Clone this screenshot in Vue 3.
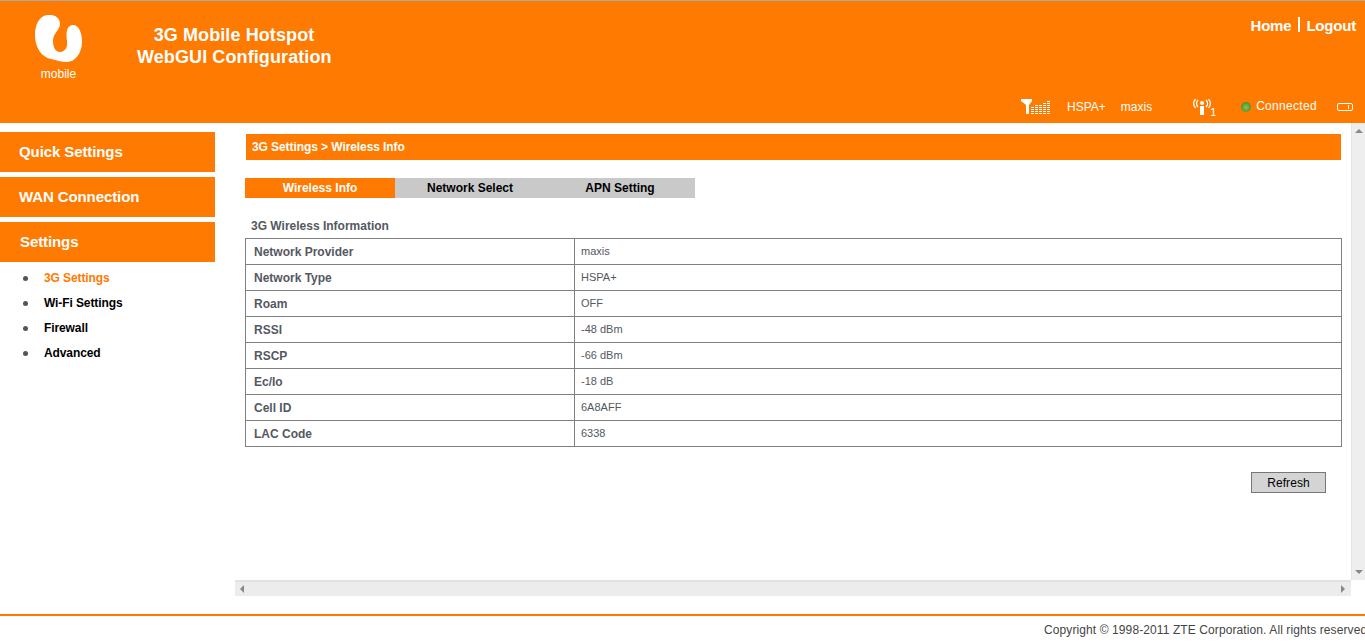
<template>
  <div class="page">
    <header class="top">
      <div class="top-row">
        <div class="logo">
          <svg width="47" height="50" viewBox="0 0 47 50">
            <path fill="#fff" d="M12 0C20 -1 25 3 25 9C25 15 18 18 18 26C18 33 21 37 25 37C30 37 33 32 32 26C31 20 31 10 38 10C44 10 47 18 47 27C47 38 40 47 32 47C26 47 22 45 16 44C6 42 0 32 0 20C0 10 4 1 12 0Z" />
          </svg>
          <span class="logo-text">mobile</span>
        </div>
        <div class="title">3G Mobile Hotspot<br />WebGUI Configuration</div>
        <nav class="top-links">
          <a>Home</a><span class="sep"></span><a>Logout</a>
        </nav>
      </div>
      <div class="status">
        <svg class="ic-signal" width="30" height="16" viewBox="0 0 30 16">
          <path fill="#fff" d="M0 0H11V2L8 6V15H5V6L0 2Z" />
          <g fill="#fff">
            <rect v-for="b in signalBars" :key="b.x + '-' + b.y" :x="b.x" :y="b.y" width="3" height="1" />
          </g>
        </svg>
        <span class="st-net">HSPA+</span>
        <span class="st-op">maxis</span>
        <svg class="ic-wifi" width="24" height="16" viewBox="0 0 24 16">
          <g fill="none" stroke="#fff" stroke-width="1.3">
            <path d="M5 1C3 3 3 6 5 8M2.500 0C0 3 0 6 2.500 9M13 1C15 3 15 6 13 8M15.500 0C18 3 18 6 15.500 9" />
          </g>
          <circle cx="9" cy="4" r="2" fill="#fff" />
          <rect x="7" y="7" width="4" height="9" fill="#fff" />
        </svg>
        <span class="wifi-num">1</span>
        <span class="dot"></span>
        <span class="st-conn">Connected</span>
        <span class="battery"><i></i></span>
      </div>
    </header>

    <div class="middle">
      <aside class="side">
        <div class="menu-btn q">Quick Settings</div>
        <div class="menu-btn">WAN Connection</div>
        <div class="menu-btn s">Settings</div>
        <ul class="sub">
          <li v-for="(item, i) in subMenu" :key="item" :class="{ on: i === 0 }">{{ item }}</li>
        </ul>
      </aside>

      <section class="frame">
        <div class="frame-row">
          <div class="content">
            <div class="crumb">3G Settings &gt; Wireless Info</div>
            <div class="tabs">
              <div v-for="(t, i) in tabs" :key="t" class="tab" :class="{ on: i === 0 }">{{ t }}</div>
            </div>
            <h3 class="info-title">3G Wireless Information</h3>
            <table class="info">
              <tbody>
                <tr v-for="r in rows" :key="r[0]">
                  <th>{{ r[0] }}</th>
                  <td>{{ r[1] }}</td>
                </tr>
              </tbody>
            </table>
            <div class="actions">
              <button class="refresh" type="button">Refresh</button>
            </div>
          </div>
          <div class="vbar">
            <span class="arr up"></span>
            <span class="arr down"></span>
          </div>
        </div>
        <div class="hbar">
          <span class="arr left"></span>
          <span class="arr right"></span>
        </div>
      </section>
    </div>

    <footer class="foot">Copyright © 1998-2011 ZTE Corporation. All rights reserved</footer>
  </div>
</template>

<script setup>
const subMenu = ['3G Settings', 'Wi-Fi Settings', 'Firewall', 'Advanced']
const tabs = ['Wireless Info', 'Network Select', 'APN Setting']
const rows = [
  ['Network Provider', 'maxis'],
  ['Network Type', 'HSPA+'],
  ['Roam', 'OFF'],
  ['RSSI', '-48 dBm'],
  ['RSCP', '-66 dBm'],
  ['Ec/Io', '-18 dB'],
  ['Cell ID', '6A8AFF'],
  ['LAC Code', '6338'],
]

// five stepped bars of the signal meter, dashed
const barTops = [8, 6, 6, 4, 2]
const signalBars = []
barTops.forEach((top, col) => {
  for (let y = top; y < 16; y += 2) signalBars.push({ x: 10 + col * 4, y })
})
</script>

<style>
html, body { margin: 0; overflow: hidden; background: #fff; }
</style>

<style scoped>
.page { width: 1365px; height: 644px; overflow: hidden; font-family: "Liberation Sans", Arial, sans-serif; }

/* Header */
.top { height: 122px; background: #ff7a00; border-top: 1px solid #aaa; color: #fff; }
.top-row { display: flex; height: 89px; }
.logo { width: 47px; margin: 14px 0 0 35px; display: flex; flex-direction: column; align-items: center; }
.logo svg { display: block; flex-shrink: 0; }
.logo-text { font-size: 12px; line-height: 12px; margin-top: 3px; }
.title { width: 194px; margin: 23px 0 0 55px; font-size: 18px; font-weight: 700; line-height: 22px; letter-spacing: .1px; text-align: center; white-space: nowrap; }
.top-links { margin: 16px 9px 0 auto; display: flex; align-items: flex-start; font-size: 15px; font-weight: 700; line-height: 18px; letter-spacing: -.2px; }
.sep { width: 2px; height: 15px; margin: 0 6px 0 7px; background: #fff; }
.status { display: flex; align-items: center; height: 33px; font-size: 12px; }
.ic-signal { margin-left: 1021px; }
.st-net { margin-left: 16px; }
.st-op { margin-left: 15px; }
.ic-wifi { margin-left: 41px; }
.wifi-num { font-size: 11px; margin: 10px 0 0 -7px; width: 9px; }
.dot { width: 10px; height: 10px; margin-left: 22px; border-radius: 50%; background: radial-gradient(circle at 50% 55%, #8cc63f, #4f8f3a 70%, #7f9a6a); }
.st-conn { margin-left: 5px; margin-top: -2px; letter-spacing: .3px; }
.battery { width: 14px; height: 6px; margin-left: 20px; border: 1px solid #fff; border-radius: 2px; position: relative; }
.battery i { position: absolute; right: 3px; top: 1px; width: 1px; height: 4px; background: #fff; }

/* Sidebar */
.middle { display: flex; height: 473px; }
.side { width: 215px; padding-top: 9px; margin-right: 20px; }
.menu-btn { height: 40px; margin-bottom: 5px; padding-left: 19px; background: #ff7a00; color: #fff; font-size: 15px; font-weight: 700; line-height: 40px; letter-spacing: -.1px; }
.menu-btn.s { padding-left: 20px; margin-bottom: 4px; }
.sub { list-style: none; margin: 0; padding: 0; }
.sub li { position: relative; height: 25px; padding-left: 44px; font-size: 12px; font-weight: 700; line-height: 25px; letter-spacing: -.1px; color: #000; }
.sub li::before { content: ""; position: absolute; left: 23px; top: 10px; width: 5px; height: 5px; border-radius: 50%; background: #555; }
.sub li.on { color: #ff7a00; }

/* Frame */
.frame { width: 1130px; display: flex; flex-direction: column; }
.frame-row { display: flex; height: 457px; }
.content { width: 1117px; box-sizing: border-box; padding: 11px 0 0 10px; }
.crumb { width: 1095px; height: 26px; margin-left: 1px; padding-left: 6px; box-sizing: border-box; background: #ff7a00; color: #fff; font-size: 12px; font-weight: 700; line-height: 27px; letter-spacing: -.08px; }
.tabs { display: flex; margin-top: 18px; }
.tab { width: 150px; height: 20px; background: #c9c9c9; color: #000; font-size: 12px; font-weight: 700; line-height: 20px; text-align: center; }
.tab.on { background: #ff7a00; color: #fff; }
.info-title { margin: 21px 0 0 6px; font-size: 12px; line-height: 14px; font-weight: 700; color: #555860; }
.info { width: 1097px; margin-top: 5px; border-collapse: collapse; table-layout: fixed; }
.info th, .info td { height: 25px; padding: 0; border: 1px solid #808080; text-align: left; }
.info th { width: 320px; padding-left: 8px; font-size: 12px; color: #555860; }
.info td { height: 24px; padding: 0 0 1px 6px; font-size: 11px; color: #555860; }
.actions { display: flex; justify-content: flex-end; width: 1081px; margin-top: 25px; }
.refresh { width: 75px; height: 21px; padding: 0; border: 1px solid #777; background: #d4d4d4; color: #000; font: 12px "Liberation Sans", Arial, sans-serif; letter-spacing: .1px; }

/* Fake scrollbars */
.vbar { width: 13px; margin-left: 0; background: #eee; border-left: 1px solid #e4e4e4; display: flex; flex-direction: column; justify-content: space-between; align-items: center; padding: 6px 0; }
.hbar { height: 16px; width: 1116px; background: #ececec; border-top: 2px solid #e2e2e2; box-sizing: border-box; display: flex; justify-content: space-between; align-items: center; padding: 0 6px 0 5px; }
.arr { width: 0; height: 0; border: 4px solid transparent; }
.arr.up { border-top: 0; border-bottom-color: #888; }
.arr.down { border-bottom: 0; border-top-color: #888; }
.arr.left { border-left: 0; border-right-color: #888; }
.arr.right { border-right: 0; border-left-color: #888; }

/* Footer */
.foot { margin-top: 18px; height: 28px; border-top: 2px solid #ff7a00; box-sizing: content-box; padding-left: 1044px; font-size: 12px; line-height: 28px; letter-spacing: .1px; color: #444; white-space: nowrap; }
</style>
